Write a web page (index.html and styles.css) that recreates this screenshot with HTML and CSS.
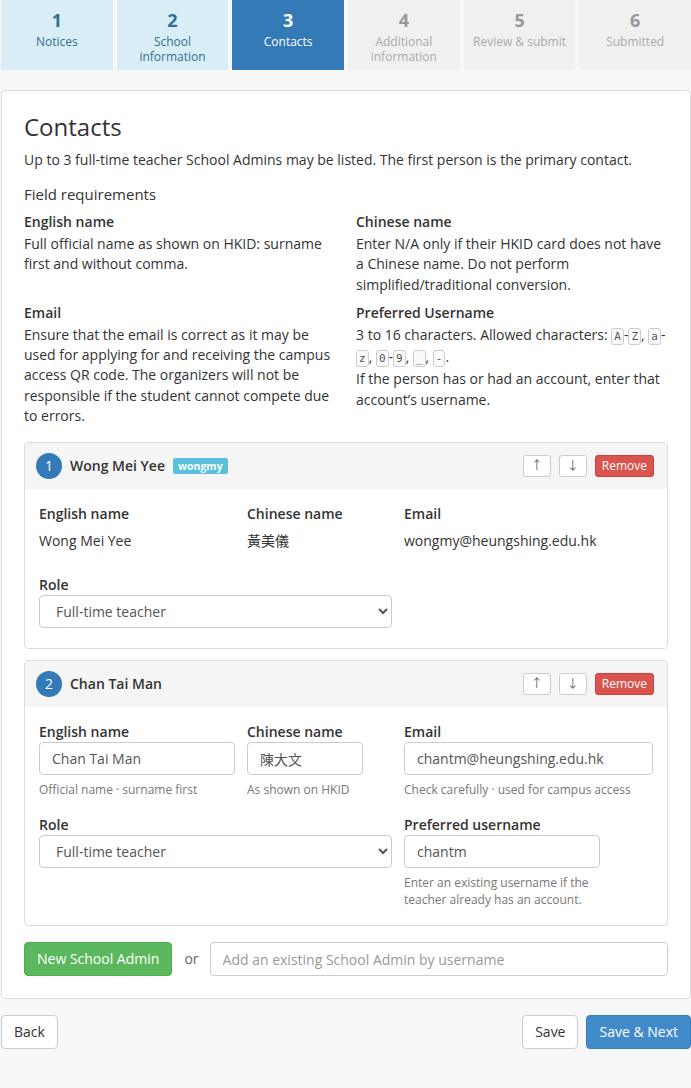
FILE: index.html
```html
<!DOCTYPE html>
<html lang="en">
<head>
<meta charset="utf-8">
<title>Registration – Contacts</title>
<link rel="stylesheet" href="styles.css">
</head>
<body>
<div class="page">
  <nav class="steps">
    <div class="step done"><span class="num">1</span><span class="lbl">Notices</span></div>
    <div class="step done"><span class="num">2</span><span class="lbl">School<br>information</span></div>
    <div class="step active"><span class="num">3</span><span class="lbl">Contacts</span></div>
    <div class="step todo"><span class="num">4</span><span class="lbl">Additional<br>information</span></div>
    <div class="step todo"><span class="num">5</span><span class="lbl">Review &amp; submit</span></div>
    <div class="step todo"><span class="num">6</span><span class="lbl">Submitted</span></div>
  </nav>

  <main class="panel">
    <h1 class="title">Contacts</h1>
    <p class="intro">Up to 3 full-time teacher School Admins may be listed. The first person is the primary contact.</p>

    <h2 class="subtitle">Field requirements</h2>
    <div class="reqs">
      <div class="req">
        <h3>English name</h3>
        <p>Full official name as shown on HKID: surname first and without comma.</p>
      </div>
      <div class="req">
        <h3>Chinese name</h3>
        <p>Enter N/A only if their HKID card does not have a Chinese name. Do not perform simplified/traditional conversion.</p>
      </div>
      <div class="req">
        <h3>Email</h3>
        <p>Ensure that the email is correct as it may be used for applying for and receiving the campus access QR code. The organizers will not be responsible if the student cannot compete due to errors.</p>
      </div>
      <div class="req">
        <h3>Preferred Username</h3>
        <p>3 to 16 characters. Allowed characters: <code>A</code>-<code>Z</code>, <code>a</code>-<code>z</code>, <code>0</code>-<code>9</code>, <code>_</code>, <code>-</code>.<br>If the person has or had an account, enter that account’s username.</p>
      </div>
    </div>

    <section class="contact">
      <header class="contact-head">
        <span class="idx">1</span>
        <span class="name">Wong Mei Yee</span>
        <span class="tag">wongmy</span>
        <div class="actions">
          <button class="btn btn-sm btn-light">↑</button>
          <button class="btn btn-sm btn-light">↓</button>
          <button class="btn btn-sm btn-danger">Remove</button>
        </div>
      </header>
      <div class="contact-body">
        <div class="fields">
          <div class="field"><label>English name</label><div class="value">Wong Mei Yee</div></div>
          <div class="field"><label>Chinese name</label><div class="value">黃美儀</div></div>
          <div class="field"><label>Email</label><div class="value">wongmy@heungshing.edu.hk</div></div>
          <div class="field span2"><label>Role</label>
            <select class="control"><option>Full-time teacher</option></select>
          </div>
        </div>
      </div>
    </section>

    <section class="contact">
      <header class="contact-head">
        <span class="idx">2</span>
        <span class="name">Chan Tai Man</span>
        <div class="actions">
          <button class="btn btn-sm btn-light">↑</button>
          <button class="btn btn-sm btn-light">↓</button>
          <button class="btn btn-sm btn-danger">Remove</button>
        </div>
      </header>
      <div class="contact-body">
        <div class="fields">
          <div class="field"><label>English name</label>
            <input class="control" value="Chan Tai Man">
            <small>Official name · surname first</small>
          </div>
          <div class="field"><label>Chinese name</label>
            <input class="control narrow" value="陳大文">
            <small>As shown on HKID</small>
          </div>
          <div class="field"><label>Email</label>
            <input class="control" value="chantm@heungshing.edu.hk">
            <small>Check carefully · used for campus access</small>
          </div>
          <div class="field span2"><label>Role</label>
            <select class="control"><option>Full-time teacher</option></select>
          </div>
          <div class="field"><label>Preferred username</label>
            <input class="control user" value="chantm">
            <small class="wrap">Enter an existing username if the teacher already has an account.</small>
          </div>
        </div>
      </div>
    </section>

    <div class="add-row">
      <button class="btn btn-success">New School Admin</button>
      <span class="or">or</span>
      <input class="control add" placeholder="Add an existing School Admin by username">
    </div>
  </main>

  <footer class="nav-row">
    <button class="btn btn-light">Back</button>
    <div class="right">
      <button class="btn btn-light">Save</button>
      <button class="btn btn-primary">Save &amp; Next</button>
    </div>
  </footer>
</div>
</body>
</html>
```

FILE: styles.css
```css
* { box-sizing: border-box; }

html, body {
  margin: 0;
  background: #f7f7f7;
}

body {
  font-family: "Open Sans", "Noto Sans CJK TC", sans-serif;
  font-size: 14px;
  line-height: 20px;
  color: #333;
}

.page {
  margin-left: 1px;
}

/* wizard steps */
.steps {
  display: flex;
  gap: 4px;
  height: 70px;
}

.step {
  flex: 1;
  display: flex;
  flex-direction: column;
  align-items: center;
  padding-top: 9px;
  text-align: center;
}

.step .num {
  font-size: 18px;
  font-weight: 700;
  line-height: 22px;
}

.step .lbl {
  font-size: 12px;
  line-height: 15px;
  margin-top: 3px;
}

.step.done { background: #d9edf7; color: #31708f; }
.step.active { background: #337ab7; color: #fff; }
.step.todo { background: #f0f0f0; color: #999; }
.step.todo .lbl { color: #aaa; }

/* main panel */
.panel {
  margin-top: 20px;
  background: #fff;
  border: 1px solid #ddd;
  border-radius: 4px;
  padding: 20px 22px 22px;
}

.title {
  margin: 0;
  font-size: 24px;
  font-weight: 400;
  line-height: 32px;
}

.intro {
  margin: 7px 0 0;
}

.subtitle {
  margin: 13px 0 0;
  font-size: 15px;
  font-weight: 400;
  line-height: 22px;
}

.reqs {
  display: grid;
  grid-template-columns: 1fr 1fr;
  column-gap: 20px;
  row-gap: 8px;
  margin-top: 7px;
}

.req h3 {
  margin: 0 0 2px;
  font-size: 14px;
  font-weight: 600;
  line-height: 20px;
}

.req p {
  margin: 0;
  line-height: 20.25px;
}

code {
  font-family: "DejaVu Sans Mono", monospace;
  font-size: 11px;
  color: #555;
  background: #fafafa;
  border: 1px solid #ccc;
  border-radius: 3px;
  padding: 1px 2px;
}

/* contact cards */
.contact {
  margin-top: 11px;
  border: 1px solid #ddd;
  border-radius: 4px;
  overflow: hidden;
}

.reqs + .contact { margin-top: 16px; }

.contact-head {
  display: flex;
  align-items: center;
  height: 46px;
  padding: 0 13px 0 11px;
  background: #f5f5f5;
}

.idx {
  width: 26px;
  height: 26px;
  border-radius: 50%;
  background: #337ab7;
  color: #fff;
  display: flex;
  align-items: center;
  justify-content: center;
  font-size: 14px;
}

.name {
  margin-left: 8px;
  font-weight: 600;
}

.tag {
  margin-left: 8px;
  background: #5bc0de;
  color: #fff;
  font-size: 10.5px;
  font-weight: 700;
  line-height: 16px;
  padding: 0 5px;
  border-radius: 2px;
}

.actions {
  margin-left: auto;
  display: flex;
  gap: 8px;
}

.contact-body {
  padding: 15px 14px 20px;
}

.fields {
  display: grid;
  grid-template-columns: 196px 145px 1fr;
  column-gap: 12px;
  row-gap: 17px;
}

.field { display: flex; flex-direction: column; align-items: flex-start; }
.field.span2 { grid-column: span 2; }

.field label {
  font-weight: 600;
  line-height: 20px;
}

.field .value {
  margin-top: 7px;
  margin-bottom: 7px;
}

.field small {
  font-size: 12px;
  line-height: 17px;
  color: #777;
  margin-top: 6px;
}

.field small.wrap {
  max-width: 200px;
  margin-bottom: -3px;
}

.control {
  width: 100%;
  height: 33px;
  font-family: inherit;
  font-size: 14px;
  color: #555;
  background: #fff;
  border: 1px solid #ccc;
  border-radius: 4px;
  padding: 5px 12px;
}

select.control { padding: 5px 12px; }
.control.narrow { width: 116px; }
.control.user { width: 196px; }

/* buttons */
.btn {
  font-family: inherit;
  font-size: 14px;
  line-height: 20px;
  height: 34px;
  padding: 6px 12px;
  border: 1px solid transparent;
  border-radius: 4px;
  cursor: pointer;
}

.btn-sm {
  height: 22px;
  font-size: 12px;
  line-height: 16px;
  padding: 2px 6px;
  border-radius: 3px;
}

.btn-light { background: #fff; border-color: #ccc; color: #333; }
.btn-sm.btn-light { width: 28px; color: #666; }
.btn-danger { background: #d9534f; border-color: #d43f3a; color: #fff; }
.btn-success { background: #5cb85c; border-color: #4cae4c; color: #fff; }
.btn-primary { background: #428bca; border-color: #357ebd; color: #fff; }

.add-row {
  display: flex;
  align-items: center;
  margin-top: 16px;
}

.or {
  margin: 0 11px 0 12px;
  color: #666;
}

.control.add {
  flex: 1;
  height: 34px;
}

.control.add::placeholder { color: #999; }

/* bottom navigation */
.nav-row {
  display: flex;
  justify-content: space-between;
  margin-top: 16px;
}

.nav-row .right {
  display: flex;
  gap: 8px;
}
```
